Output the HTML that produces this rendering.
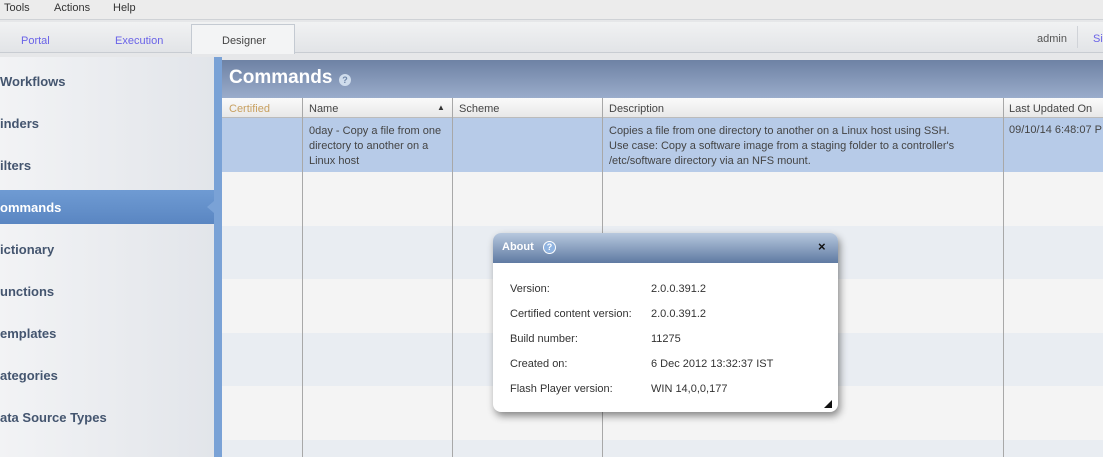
<!DOCTYPE html>
<html><head><style>
*{margin:0;padding:0;box-sizing:border-box}
body{width:1103px;height:457px;overflow:hidden;background:#e6e7e9;font-family:"Liberation Sans",sans-serif;font-size:11px;color:#333;position:relative}
.a{position:absolute}
</style></head><body>
<div class="a" style="left:0;top:0;width:1103px;height:20px;background:#ececec;border-bottom:1px solid #cfd2d6"></div>
<div class="a" style="left:4px;top:2px;color:#333">Tools</div>
<div class="a" style="left:54px;top:2px">Actions</div>
<div class="a" style="left:113px;top:2px">Help</div>
<div class="a" style="left:0;top:22px;width:1103px;height:31px;background:linear-gradient(#f1f2f3,#e2e4e7);border-bottom:1px solid #c8ccd2"></div>
<div class="a" style="left:21px;top:35px;color:#6a63e8">Portal</div>
<div class="a" style="left:115px;top:35px;color:#6a63e8">Execution</div>
<div class="a" style="left:191px;top:24px;width:104px;height:30px;background:#f3f4f5;border:1px solid #c4cad2;border-bottom:none"></div>
<div class="a" style="left:222px;top:35px;color:#444">Designer</div>
<div class="a" style="left:1037px;top:33px;color:#555">admin</div>
<div class="a" style="left:1077px;top:26px;width:1px;height:22px;background:#d0d3d8"></div>
<div class="a" style="left:1093px;top:33px;color:#6a63e8">Si</div>
<div class="a" style="left:0;top:57px;width:214px;height:400px;background:linear-gradient(90deg,#f2f3f5,#e2e5ea)"></div>
<div class="a" style="left:214px;top:57px;width:8px;height:400px;background:#7aa2d6"></div>
<div class="a" style="left:0;top:190px;width:214px;height:34px;background:linear-gradient(#6f9bd3,#5a86c2)"></div>
<div class="a" style="left:207px;top:201px;width:0;height:0;border-top:6px solid transparent;border-bottom:6px solid transparent;border-right:7px solid #7aa2d6"></div>
<div class="a" style="left:0;top:61px;font-weight:bold;font-size:13px;color:#44556f;line-height:42px;width:214px">
<div style="height:42px">Workflows</div><div style="height:42px">inders</div><div style="height:42px">ilters</div><div style="height:42px;color:#fff">ommands</div><div style="height:42px">ictionary</div><div style="height:42px">unctions</div><div style="height:42px">emplates</div><div style="height:42px">ategories</div><div style="height:42px">ata Source Types</div></div>
<div class="a" style="left:222px;top:60px;width:881px;height:38px;background:linear-gradient(#6e82a4,#9aaccb)"></div>
<div class="a" style="left:229px;top:67px;font-size:19px;font-weight:bold;color:#fff">Commands</div>
<div class="a" style="left:339px;top:74px;width:12px;height:12px;border-radius:50%;background:#cfdcec;color:#6f86a8;font-size:9px;font-weight:bold;text-align:center;line-height:12px">?</div>
<div class="a" style="left:222px;top:98px;width:881px;height:20px;background:linear-gradient(#fafafa,#e8e8e8);border-bottom:1px solid #bbb"></div>
<div class="a" style="left:222px;top:118px;width:881px;height:339px;background:repeating-linear-gradient(#f4f4f4 0 54px,#e9edf2 54px 107px);background-position:0 54px"></div>
<div class="a" style="left:222px;top:118px;width:881px;height:54px;background:#b7cbe8"></div>
<div class="a" style="left:302px;top:98px;width:1px;height:359px;background:#a8a8a8"></div>
<div class="a" style="left:452px;top:98px;width:1px;height:359px;background:#a8a8a8"></div>
<div class="a" style="left:602px;top:98px;width:1px;height:359px;background:#a8a8a8"></div>
<div class="a" style="left:1003px;top:98px;width:1px;height:359px;background:#a8a8a8"></div>
<div class="a" style="left:229px;top:103px;color:#c8a060">Certified</div>
<div class="a" style="left:309px;top:103px;color:#444">Name</div>
<div class="a" style="left:437px;top:103px;font-size:8px">▲</div>
<div class="a" style="left:459px;top:103px;color:#444">Scheme</div>
<div class="a" style="left:609px;top:103px;color:#444">Description</div>
<div class="a" style="left:1009px;top:103px;color:#444">Last Updated On</div>
<div class="a" style="left:309px;top:124px;line-height:15px;color:#444">0day - Copy a file from one<br>directory to another on a<br>Linux host</div>
<div class="a" style="left:609px;top:124px;line-height:15px;color:#444">Copies a file from one directory to another on a Linux host using SSH.<br>Use case: Copy a software image from a staging folder to a controller's<br>/etc/software directory via an NFS mount.</div>
<div class="a" style="left:1009px;top:124px;color:#444">09/10/14 6:48:07 P</div>
<div class="a" style="left:493px;top:233px;width:345px;height:179px;background:#fff;border-radius:8px;box-shadow:2px 4px 8px rgba(0,0,0,.45);overflow:hidden">
<div style="height:30px;background:linear-gradient(#b7c8de,#5f7aa2);position:relative">
<div class="a" style="left:9px;top:8px;color:#fff;font-weight:bold">About</div>
<div class="a" style="left:50px;top:8px;width:13px;height:13px;border-radius:50%;background:#8fb3e0;border:1px solid #fff;color:#fff;font-size:9px;font-weight:bold;text-align:center;line-height:11px">?</div>
<div class="a" style="left:325px;top:6px;font-weight:bold;font-size:13px;color:#111">×</div>
</div>
<div class="a" style="left:17px;top:44px;line-height:25px;color:#333">Version:<br>Certified content version:<br>Build number:<br>Created on:<br>Flash Player version:</div>
<div class="a" style="left:158px;top:44px;line-height:25px;color:#333">2.0.0.391.2<br>2.0.0.391.2<br>11275<br>6 Dec 2012 13:32:37 IST<br>WIN 14,0,0,177</div>
<div class="a" style="left:331px;top:167px;width:0;height:0;border-left:8px solid transparent;border-bottom:8px solid #111"></div>
</div>
</body></html>
